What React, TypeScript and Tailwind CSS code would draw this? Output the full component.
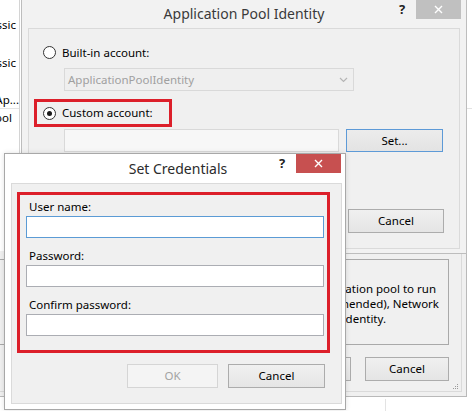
import React from "react";

function Radio({ checked }: { checked?: boolean }) {
  return (
    <span className="flex h-[13px] w-[13px] shrink-0 items-center justify-center rounded-full border border-[#333333] bg-white">
      {checked ? <span className="h-[5px] w-[5px] rounded-full bg-[#1a1a1a]" /> : null}
    </span>
  );
}

function CloseButton({ active }: { active?: boolean }) {
  return (
    <div
      className={
        active
          ? "flex h-[19px] w-[45px] items-center justify-center bg-[#c75050]"
          : "flex h-[19px] w-[45px] items-center justify-center bg-[#c0c0c0]"
      }
    >
      <svg width="9" height="9" viewBox="0 0 9 9">
        <path d="M1 1L8 8M8 1L1 8" stroke="#ffffff" strokeWidth="1.4" />
      </svg>
    </div>
  );
}

function Grip() {
  return (
    <svg width="7" height="7" viewBox="0 0 7 7">
      <rect x="5" y="1" width="1" height="1" fill="#9a9a9a" />
      <rect x="3" y="3" width="1" height="1" fill="#9a9a9a" />
      <rect x="5" y="3" width="1" height="1" fill="#9a9a9a" />
      <rect x="1" y="5" width="1" height="1" fill="#9a9a9a" />
      <rect x="3" y="5" width="1" height="1" fill="#9a9a9a" />
      <rect x="5" y="5" width="1" height="1" fill="#9a9a9a" />
    </svg>
  );
}

const btn =
  "flex h-[24px] items-center justify-center border border-[#acacac] bg-[linear-gradient(#f0f0f0,#e5e5e5)]";

export default function App() {
  return (
    <div className="relative h-[411px] w-[472px] overflow-hidden bg-white font-['Noto_Sans',sans-serif] text-[11.5px] leading-[16px] text-black">
      {/* faint lines of the manager list behind everything */}
      <div className="absolute left-[467px] top-[108px] h-[1px] w-[5px] bg-[#e3e3e3]" />
      <div className="absolute left-[385px] top-[399px] h-[12px] w-[1px] bg-[#e3e3e3]" />

      {/* Advanced Settings window (background) */}
      <div className="absolute left-[-120px] top-[-60px] h-[457px] w-[587px] border border-[#b9b9b9] bg-[#f0f0f0] p-[4px]">
        <div className="relative flex h-full w-full flex-col border border-[#dadada]">
          {/* property grid */}
          <div className="flex flex-1 bg-white">
            <div className="flex w-[134px] flex-col border-r border-[#d4d4d4] pt-[50px]">
              <div className="h-[19px]" />
              <div className="flex h-[19px] items-center justify-end whitespace-nowrap pr-[3px]">Classic</div>
              <div className="h-[19px]" />
              <div className="flex h-[19px] items-center justify-end whitespace-nowrap pr-[3px]">Classic</div>
              <div className="h-[19px]" />
              <div className="flex h-[18px] items-center justify-end whitespace-nowrap border-b border-[#e3e3e3]">Ap...</div>
              <div className="flex h-[18px] items-center justify-end whitespace-nowrap pr-[7px]">AppPool</div>
            </div>
          </div>
          {/* description */}
          <div className="mx-[12px] mt-[8px] h-[86px] overflow-hidden border border-[#a9a9a9] pt-[21px] leading-[15px]">
            <div className="flex justify-end whitespace-nowrap pr-[12px]">application pool to run</div>
            <div className="flex justify-end whitespace-nowrap pr-[9px]">(recommended), Network</div>
            <div className="flex justify-end whitespace-nowrap pr-[62px]">user identity.</div>
          </div>
          <div className="mb-[10px] mt-[12px] flex justify-end gap-[14px] pr-[12px]">
            <div className={btn + " w-[84px]"} />
            <div className={btn + " w-[84px]"}>Cancel</div>
          </div>
          <div className="absolute bottom-[1px] right-[2px]">
            <Grip />
          </div>
        </div>
      </div>

      {/* Application Pool Identity window */}
      <div className="absolute left-[21px] top-[-1px] flex h-[255px] w-[446px] flex-col border border-[#bdbdbd] bg-[#f2f2f2] px-[6px] pb-[4px]">
        <div className="relative flex h-[28px] shrink-0 items-center justify-center text-[14px] text-[#3a3a3a]">
          <span>Application Pool Identity</span>
          <div className="absolute right-[-1px] top-0 flex items-start gap-[7px]">
            <span className="mt-[1px] w-[14px] text-center text-[13px] font-bold leading-[16px] text-[#222222]">?</span>
            <CloseButton />
          </div>
        </div>
        <div className="flex flex-1 flex-col border border-[#dadada] bg-[#f0f0f0] pl-[14px]">
          <div className="mt-[17px] flex h-[13px] items-center gap-[6px]">
            <Radio />
            <span>Built-in account:</span>
          </div>
          <div className="ml-[21px] mt-[9px] flex h-[23px] w-[290px] items-center justify-between border border-[#d9d9d9] bg-[#efefef] pl-[3px] pr-[5px] text-[#a0a0a0]">
            <span>ApplicationPoolIdentity</span>
            <svg width="9" height="6" viewBox="0 0 9 6">
              <path d="M1 1L4.5 4.5L8 1" stroke="#b5b5b5" strokeWidth="1.2" fill="none" />
            </svg>
          </div>
          <div className="ml-[-9px] mt-[8px] flex h-[28px] w-[138px] items-center gap-[6px] border-[3px] border-[#dc1f2a] pl-[6px]">
            <Radio checked />
            <span>Custom account:</span>
          </div>
          <div className="ml-[21px] mt-[2px] flex gap-[7px]">
            <div className="h-[23px] w-[275px] border border-[#d9d9d9] bg-[#f7f7f7]" />
            <div className="flex h-[23px] w-[97px] items-center justify-center border border-[#5d9ad7] bg-[linear-gradient(#ececec,#e3e3e3)]">Set...</div>
          </div>
          <div className="mt-[57px] flex justify-end gap-[12px] pr-[15px]">
            <div className={btn + " w-[96px]"} />
            <div className={btn + " w-[96px]"}>Cancel</div>
          </div>
        </div>
      </div>

      {/* Set Credentials window (active) */}
      <div className="absolute left-[4px] top-[153px] flex h-[257px] w-[342px] flex-col border border-[#a8a8a8] bg-white pb-[5px] pl-[6px] pr-[3px] shadow-[0_0_5px_rgba(0,0,0,0.12)]">
        <div className="relative flex h-[29px] shrink-0 items-center justify-center text-[14px] text-[#2b2b2b]">
          <span className="pl-[3px]">Set Credentials</span>
          <div className="absolute right-[1px] top-0 flex items-start gap-[7px]">
            <span className="mt-[1px] w-[14px] text-center text-[13px] font-bold leading-[16px] text-[#222222]">?</span>
            <CloseButton active />
          </div>
        </div>
        <div className="flex flex-1 flex-col border border-[#dadada] bg-[#f0f0f0]">
          <div className="ml-[5px] mt-[8px] flex h-[161px] w-[313px] flex-col border-[3px] border-[#dc1f2a] pl-[6px] pr-[3px] pt-[4px]">
            <div className="pl-[3px]">User name:</div>
            <div className="mt-[1px] h-[22px] border border-[#5b9bd5] bg-white" />
            <div className="mt-[10px] pl-[3px]">Password:</div>
            <div className="mt-[1px] h-[22px] border border-[#abadb3] bg-white" />
            <div className="mt-[10px] pl-[3px]">Confirm password:</div>
            <div className="mt-[1px] h-[22px] border border-[#abadb3] bg-white" />
          </div>
          <div className="mt-[11px] flex justify-end gap-[10px] pr-[16px]">
            <div className="flex h-[24px] w-[91px] items-center justify-center border border-[#d5d5d5] bg-[#f4f4f4] text-[#a3a3a3]">OK</div>
            <div className={btn + " w-[97px]"}>Cancel</div>
          </div>
        </div>
      </div>
    </div>
  );
}
